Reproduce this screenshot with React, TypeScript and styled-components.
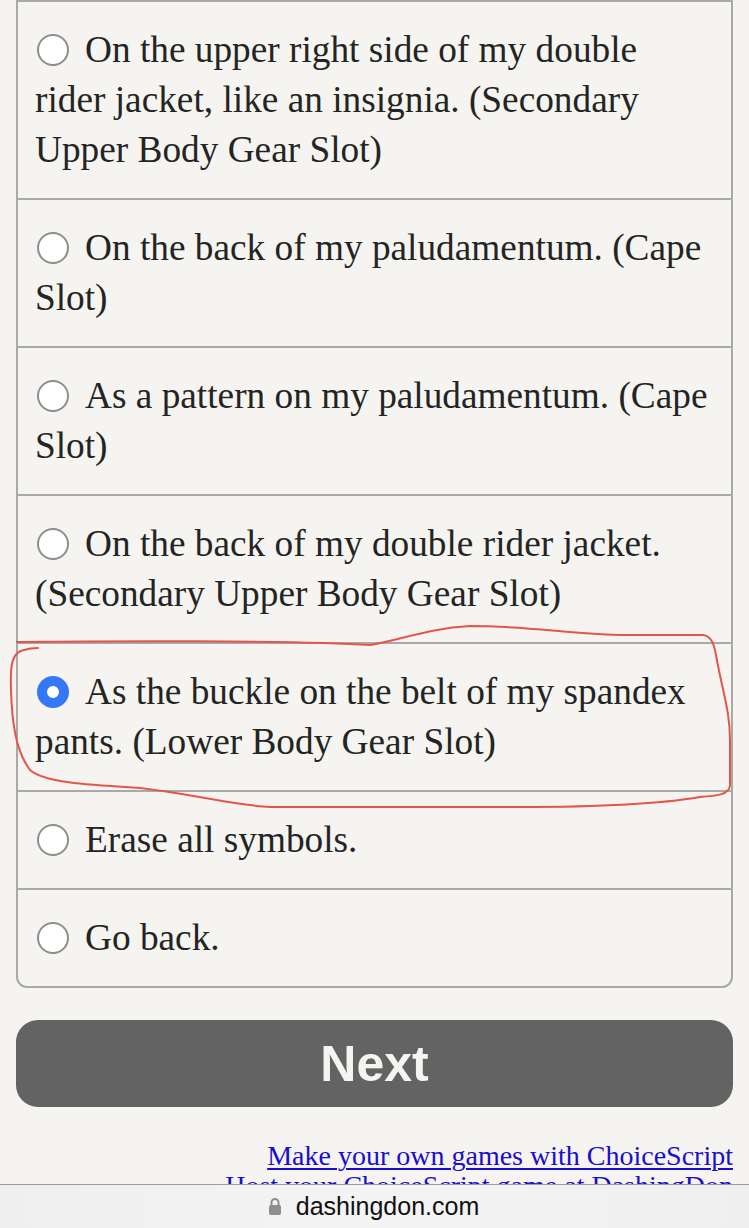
import React from "react";
import styled, { createGlobalStyle } from "styled-components";

const Global = createGlobalStyle`
  html, body { margin: 0; padding: 0; background: #f5f4f0; }
  body { font-family: "Liberation Serif", "Times New Roman", serif; color: #222; }
  * { box-sizing: border-box; }
`;

const Page = styled.div`
  position: relative;
  width: 749px;
  min-height: 1228px;
  overflow: hidden;
  padding: 0 16px;
`;

const ChoiceList = styled.div`
  border: 2px solid #a9a9a9;
  border-radius: 0 0 11px 11px;
  background: #f5f4f0;
`;

const ChoiceRow = styled.label`
  display: block;
  padding: 23px 20px 23px 17px;
  font-size: 37.3px;
  line-height: 50px;
  color: #242424;
  & + & { border-top: 2px solid #a9a9a9; }
`;

const Radio = styled.span<{ $checked?: boolean }>`
  display: inline-block;
  width: 32px;
  height: 32px;
  border-radius: 50%;
  margin: 0 16px 0 2px;
  vertical-align: -4px;
  background: #fff;
  border: ${(p) => (p.$checked ? "10px solid #3478f6" : "2.5px solid #8e8e8e")};
`;

const NextButton = styled.button`
  display: block;
  width: 100%;
  height: 87px;
  margin-top: 32px;
  border: none;
  border-radius: 22px;
  background: #636363;
  color: #f5f4f0;
  font-family: "Liberation Sans", Arial, sans-serif;
  font-weight: 700;
  font-size: 50px;
  padding: 0;
`;

const Credits = styled.div`
  margin-top: 34px;
  text-align: right;
  font-size: 28px;
  line-height: 30px;
`;

const CreditLink = styled.a`
  display: block;
  color: #1a0dcc;
  text-decoration: underline;
  text-underline-offset: 3px;
  text-decoration-thickness: 1.5px;
`;

const AddressBar = styled.div`
  position: fixed;
  left: 0;
  right: 0;
  bottom: 0;
  height: 44px;
  border-top: 1.5px solid #9c9c9c;
  background: linear-gradient(90deg, #efefef 0%, #f4f4f4 50%, #efefef 100%);
  display: flex;
  align-items: center;
  justify-content: center;
  gap: 14px;
  padding-right: 2px;
  font-family: "Liberation Sans", Arial, sans-serif;
  font-size: 25px;
  color: #111;
`;

const Annotation = styled.svg`
  position: absolute;
  left: 0;
  top: 0;
  pointer-events: none;
`;

const LockIcon = () => (
  <svg width="14" height="19" viewBox="0 0 14 19">
    <path d="M3.5 8 V5.5 a3.5 3.5 0 0 1 7 0 V8" fill="none" stroke="#8d8d92" strokeWidth="2" />
    <rect x="1" y="8" width="12" height="10" rx="2" fill="#8d8d92" />
  </svg>
);

const choices = [
  "On the upper right side of my double rider jacket, like an insignia. (Secondary Upper Body Gear Slot)",
  "On the back of my paludamentum. (Cape Slot)",
  "As a pattern on my paludamentum. (Cape Slot)",
  "On the back of my double rider jacket. (Secondary Upper Body Gear Slot)",
  "As the buckle on the belt of my spandex pants. (Lower Body Gear Slot)",
  "Erase all symbols.",
  "Go back.",
];

export default function App() {
  return (
    <>
      <Global />
      <Page>
        <ChoiceList>
          {choices.map((c, i) => (
            <ChoiceRow key={i}>
              <Radio $checked={i === 4} />
              {c}
            </ChoiceRow>
          ))}
        </ChoiceList>
        <NextButton>Next</NextButton>
        <Credits>
          <CreditLink href="#">Make your own games with ChoiceScript</CreditLink>
          <CreditLink href="#">Host your ChoiceScript game at DashingDon</CreditLink>
        </Credits>
        <Annotation width="749" height="1228" viewBox="0 0 749 1228">
          <path
            d="M 17 642 C 100 641, 300 640, 370 645 C 400 640, 430 628, 470 626 C 530 626, 560 633, 620 635 L 703 635 C 712 636, 714 645, 716 655 C 722 690, 730 710, 730 740 L 730 785 C 730 795, 715 796, 700 797 C 660 804, 600 807, 520 807 L 270 807 C 230 805, 200 795, 140 788 C 90 785, 45 783, 30 770 C 15 750, 12 720, 11 690 C 10 665, 12 652, 24 650 C 30 648, 34 648, 38 648"
            fill="none"
            stroke="#e2574a"
            strokeWidth="2"
            strokeLinecap="round"
          />
        </Annotation>
      </Page>
      <AddressBar>
        <LockIcon />
        <span>dashingdon.com</span>
      </AddressBar>
    </>
  );
}
